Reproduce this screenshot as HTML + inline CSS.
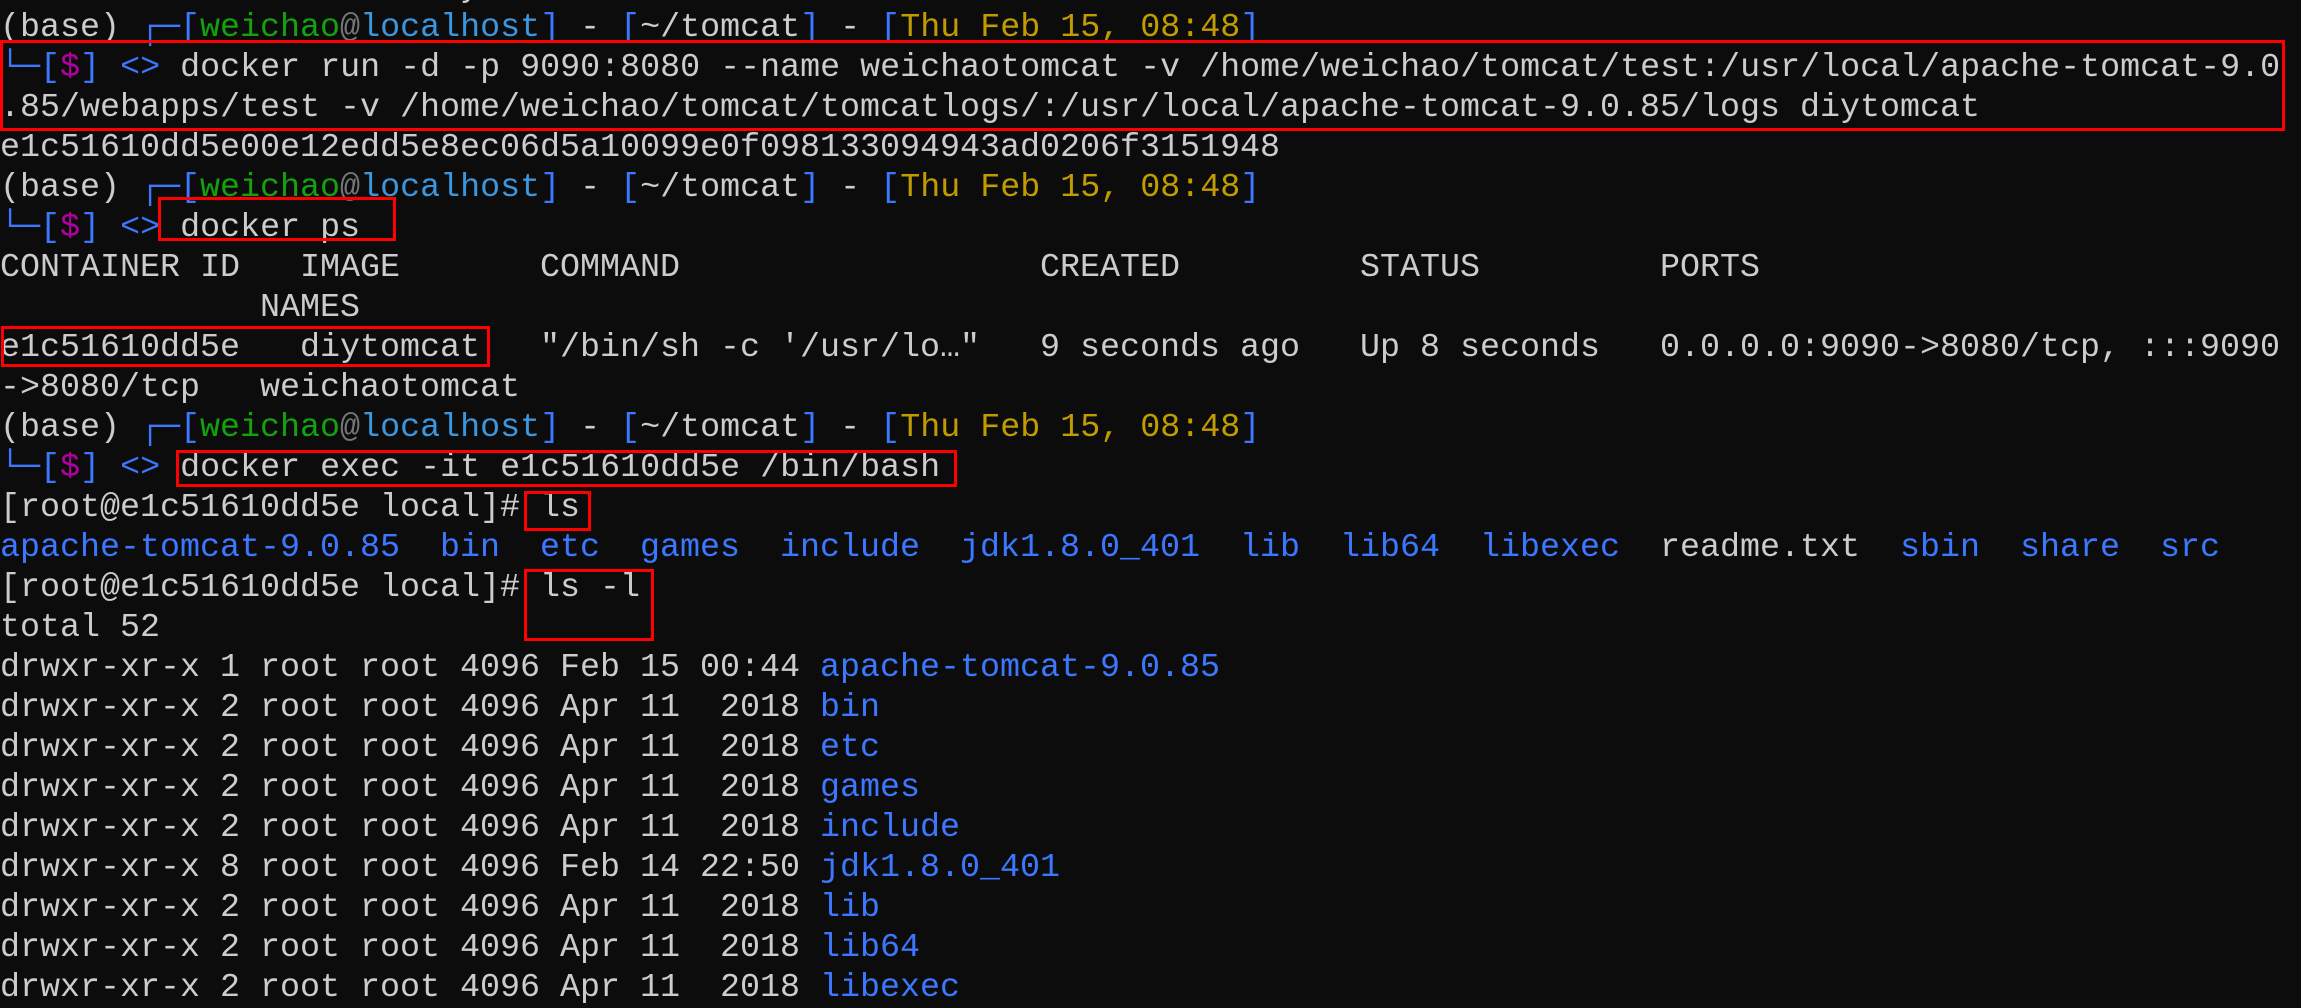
<!DOCTYPE html>
<html><head><meta charset="utf-8"><style>
html,body{margin:0;padding:0;background:#0c0c0c;width:2301px;height:999px;overflow:hidden;}
pre{position:absolute;left:0;top:-32px;margin:0;font-family:"Liberation Mono","DejaVu Sans Mono",monospace;font-size:33.33px;line-height:40px;color:#cccccc;white-space:pre;}
.b{color:#3b78ff}.g{color:#13a10e}.a{color:#767676}.l{color:#3a96dd}.y{color:#c19c00}.m{color:#b4009e}
.box{position:absolute;border:3px solid #ff0000;box-sizing:border-box;}
</style></head><body>
<pre>                       yi
(base) <span class="b">┌─[</span><span class="g">weichao</span><span class="a">@</span><span class="l">localhost</span><span class="b">]</span> - <span class="b">[</span>~/tomcat<span class="b">]</span> - <span class="b">[</span><span class="y">Thu Feb 15, 08:48</span><span class="b">]</span>
<span class="b">└─[</span><span class="m">$</span><span class="b">]</span> <span class="b">&lt;&gt;</span> docker run -d -p 9090:8080 --name weichaotomcat -v /home/weichao/tomcat/test:/usr/local/apache-tomcat-9.0
.85/webapps/test -v /home/weichao/tomcat/tomcatlogs/:/usr/local/apache-tomcat-9.0.85/logs diytomcat
e1c51610dd5e00e12edd5e8ec06d5a10099e0f098133094943ad0206f3151948
(base) <span class="b">┌─[</span><span class="g">weichao</span><span class="a">@</span><span class="l">localhost</span><span class="b">]</span> - <span class="b">[</span>~/tomcat<span class="b">]</span> - <span class="b">[</span><span class="y">Thu Feb 15, 08:48</span><span class="b">]</span>
<span class="b">└─[</span><span class="m">$</span><span class="b">]</span> <span class="b">&lt;&gt;</span> docker ps
CONTAINER ID   IMAGE       COMMAND                  CREATED         STATUS         PORTS
             NAMES
e1c51610dd5e   diytomcat   "/bin/sh -c '/usr/lo…"   9 seconds ago   Up 8 seconds   0.0.0.0:9090-&gt;8080/tcp, :::9090
-&gt;8080/tcp   weichaotomcat
(base) <span class="b">┌─[</span><span class="g">weichao</span><span class="a">@</span><span class="l">localhost</span><span class="b">]</span> - <span class="b">[</span>~/tomcat<span class="b">]</span> - <span class="b">[</span><span class="y">Thu Feb 15, 08:48</span><span class="b">]</span>
<span class="b">└─[</span><span class="m">$</span><span class="b">]</span> <span class="b">&lt;&gt;</span> docker exec -it e1c51610dd5e /bin/bash
[root@e1c51610dd5e local]# ls
<span class="b">apache-tomcat-9.0.85  bin  etc  games  include  jdk1.8.0_401  lib  lib64  libexec</span>  readme.txt  <span class="b">sbin  share  src</span>
[root@e1c51610dd5e local]# ls -l
total 52
drwxr-xr-x 1 root root 4096 Feb 15 00:44 <span class="b">apache-tomcat-9.0.85</span>
drwxr-xr-x 2 root root 4096 Apr 11  2018 <span class="b">bin</span>
drwxr-xr-x 2 root root 4096 Apr 11  2018 <span class="b">etc</span>
drwxr-xr-x 2 root root 4096 Apr 11  2018 <span class="b">games</span>
drwxr-xr-x 2 root root 4096 Apr 11  2018 <span class="b">include</span>
drwxr-xr-x 8 root root 4096 Feb 14 22:50 <span class="b">jdk1.8.0_401</span>
drwxr-xr-x 2 root root 4096 Apr 11  2018 <span class="b">lib</span>
drwxr-xr-x 2 root root 4096 Apr 11  2018 <span class="b">lib64</span>
drwxr-xr-x 2 root root 4096 Apr 11  2018 <span class="b">libexec</span>
</pre>
<div class="box" style="left:0;top:40px;width:2285px;height:91px"></div>
<div class="box" style="left:158px;top:197px;width:238px;height:44px"></div>
<div class="box" style="left:1px;top:326px;width:489px;height:41px"></div>
<div class="box" style="left:176px;top:450px;width:781px;height:37px"></div>
<div class="box" style="left:524px;top:491px;width:67px;height:40px"></div>
<div class="box" style="left:524px;top:569px;width:130px;height:72px"></div>
</body></html>
